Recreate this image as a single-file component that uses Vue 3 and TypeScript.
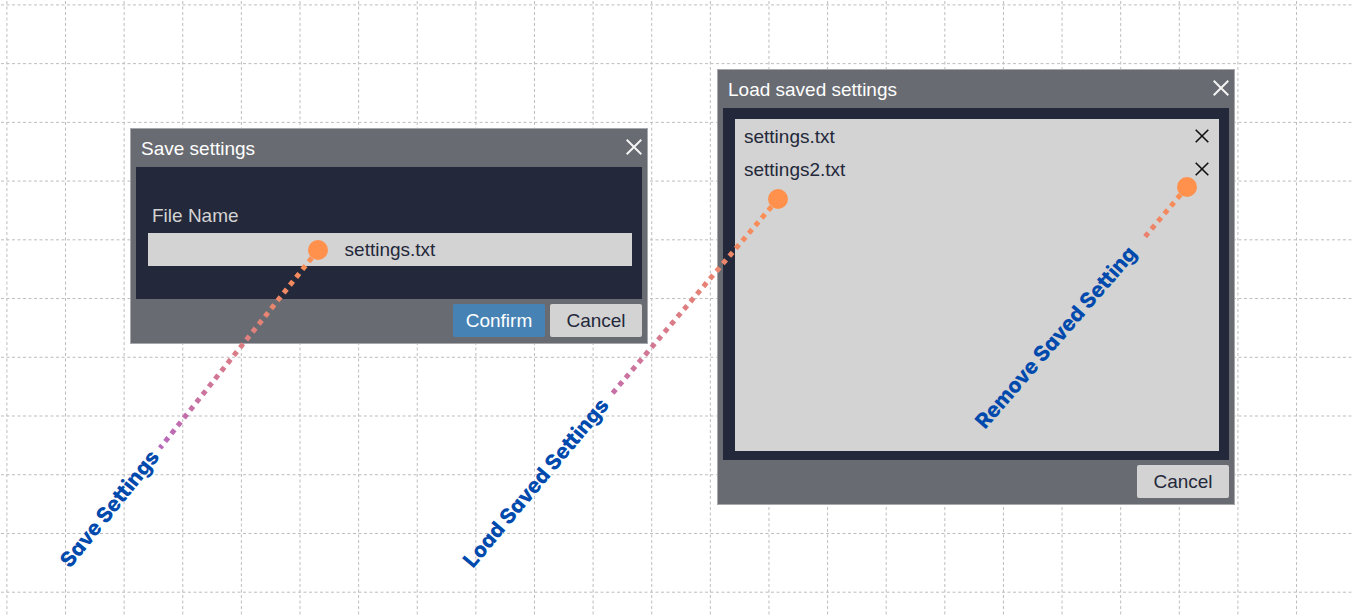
<script setup lang="ts">
import { ref } from 'vue'

interface Callout {
  id: string
  label: string
  dot: [number, number]
  tail: [number, number]
  tailColor: string
  text: [number, number]
  angle: number
}

const fileName = ref('settings.txt')
const savedFiles = ref(['settings.txt', 'settings2.txt'])

const gridX = Array.from({ length: 60 }, (_, i) => 6.9 + i * 58.62)
const gridY = Array.from({ length: 40 }, (_, i) => 4.9 + i * 58.73)

const callouts: Callout[] = [
  { id: 'save', label: 'Save Settings', dot: [318, 250], tail: [160, 448], tailColor: '#b768bd', text: [70, 569], angle: -51 },
  { id: 'load', label: 'Load Saved Settings', dot: [778, 199], tail: [611, 395], tailColor: '#c56fa9', text: [473, 569], angle: -50 },
  { id: 'remove', label: 'Remove Saved Setting', dot: [1187, 187], tail: [1144, 238], tailColor: '#e8806f', text: [985, 430], angle: -49 },
]

function removeFile(name: string) {
  savedFiles.value = savedFiles.value.filter((f) => f !== name)
}
</script>

<template>
  <main class="canvas">
    <svg class="layer" aria-hidden="true">
      <g class="grid">
        <line v-for="x in gridX" :key="'x' + x" :x1="x" :x2="x" y1="1" y2="100%" />
        <line v-for="y in gridY" :key="'y' + y" x1="1" x2="100%" :y1="y" :y2="y" />
      </g>
    </svg>

    <section class="dialog save" role="dialog" aria-labelledby="save-title">
      <header class="bar">
        <h2 id="save-title">Save settings</h2>
        <button class="close" type="button" aria-label="Close">
          <svg width="16" height="16" viewBox="0 0 16 16"><path d="M.7.7 15.3 15.3M15.3.7.7 15.3" /></svg>
        </button>
      </header>
      <div class="body form">
        <label for="file-name">File Name</label>
        <input id="file-name" v-model="fileName" type="text" />
      </div>
      <footer class="actions">
        <button class="btn primary" type="button">Confirm</button>
        <button class="btn" type="button">Cancel</button>
      </footer>
    </section>

    <section class="dialog load" role="dialog" aria-labelledby="load-title">
      <header class="bar">
        <h2 id="load-title">Load saved settings</h2>
        <button class="close" type="button" aria-label="Close">
          <svg width="16" height="16" viewBox="0 0 16 16"><path d="M.7.7 15.3 15.3M15.3.7.7 15.3" /></svg>
        </button>
      </header>
      <div class="body picker">
        <ul class="files">
          <li v-for="name in savedFiles" :key="name">
            <span>{{ name }}</span>
            <button class="remove" type="button" :aria-label="'Remove ' + name" @click="removeFile(name)">
              <svg width="14" height="14" viewBox="0 0 14 14"><path d="M.7.7 13.3 13.3M13.3.7.7 13.3" /></svg>
            </button>
          </li>
        </ul>
      </div>
      <footer class="actions">
        <button class="btn" type="button">Cancel</button>
      </footer>
    </section>

    <svg class="layer callouts">
      <defs>
        <linearGradient
          v-for="c in callouts"
          :id="'fade-' + c.id"
          :key="c.id"
          gradientUnits="userSpaceOnUse"
          :x1="c.dot[0]"
          :y1="c.dot[1]"
          :x2="c.tail[0]"
          :y2="c.tail[1]"
        >
          <stop offset="0" stop-color="#ff914d" />
          <stop offset="1" :stop-color="c.tailColor" />
        </linearGradient>
      </defs>
      <g v-for="c in callouts" :key="c.id">
        <line
          class="leader"
          :x1="c.dot[0]"
          :y1="c.dot[1]"
          :x2="c.tail[0]"
          :y2="c.tail[1]"
          :stroke="'url(#fade-' + c.id + ')'"
        />
        <circle :cx="c.dot[0]" :cy="c.dot[1]" r="10" />
        <text :transform="`translate(${c.text[0]} ${c.text[1]}) rotate(${c.angle})`">{{ c.label }}</text>
      </g>
    </svg>
  </main>
</template>

<style>
body {
  margin: 0;
  background: #fff;
}
</style>

<style scoped>
.canvas {
  position: relative;
  min-height: 100vh;
  overflow: hidden;
  font-family: "Liberation Sans", Arial, sans-serif;
  font-size: 19px;
  line-height: 22px;
}

.layer {
  position: absolute;
  inset: 0;
  width: 100%;
  height: 100%;
}

.grid line {
  stroke: #bdbdbd;
  stroke-width: 1;
  stroke-dasharray: 3 2.5;
}

.callouts {
  pointer-events: none;
}

.leader {
  stroke-width: 5;
  stroke-dasharray: 5 5;
}

.callouts circle {
  fill: #ff914d;
}

.callouts text {
  font-family: "Inter", "Open Sans", sans-serif;
  font-feature-settings: "cv11";
  font-size: 21px;
  font-weight: 800;
  fill: #004aad;
}

.dialog {
  position: absolute;
  box-sizing: border-box;
  width: 518px;
  padding: 0 5px 6px;
  border: 1px solid #a6a8ab;
  background: #686b72;
}

.save {
  left: 130px;
  top: 128px;
}

.load {
  left: 717px;
  top: 69px;
}

.bar {
  display: flex;
  align-items: center;
  justify-content: space-between;
  height: 38px;
  padding-left: 5px;
}

h2 {
  margin: 0;
  padding-top: 2px;
  font-size: 19px;
  font-weight: 400;
  color: #fff;
}

button {
  font: inherit;
  cursor: pointer;
}

.close,
.remove {
  display: flex;
  padding: 0;
  border: 0;
  background: none;
}

.close {
  padding-bottom: 2px;
}

.close path {
  fill: none;
  stroke: #f4f4f4;
  stroke-width: 2;
}

.remove path {
  fill: none;
  stroke: #111;
  stroke-width: 1.6;
}

.body {
  background: #23283a;
}

.form {
  display: flex;
  flex-direction: column;
  gap: 6px;
  padding: 38px 10px 33px 12px;
}

label {
  padding-left: 4px;
  color: #d3d3d3;
}

input {
  box-sizing: border-box;
  width: 100%;
  height: 33px;
  padding: 0 8px;
  border: 0;
  border-radius: 0;
  background: #d3d3d3;
  color: #23283a;
  font: inherit;
  text-align: center;
}

.picker {
  padding: 11px 10px 9px 12px;
}

.files {
  min-height: 332px;
  margin: 0;
  padding: 0;
  list-style: none;
  background: #d3d3d3;
  color: #23283a;
}

.files li {
  display: flex;
  align-items: center;
  justify-content: space-between;
  height: 33px;
  padding: 0 10px 0 9px;
}

.files span {
  padding-top: 2px;
}

.actions {
  display: flex;
  justify-content: flex-end;
  gap: 5px;
  padding-top: 5px;
}

.btn {
  width: 92px;
  height: 33px;
  padding: 0;
  border: 0;
  border-radius: 2px;
  background: #d3d3d3;
  color: #23283a;
}

.primary {
  background: #4682b4;
  color: #fff;
}
</style>
